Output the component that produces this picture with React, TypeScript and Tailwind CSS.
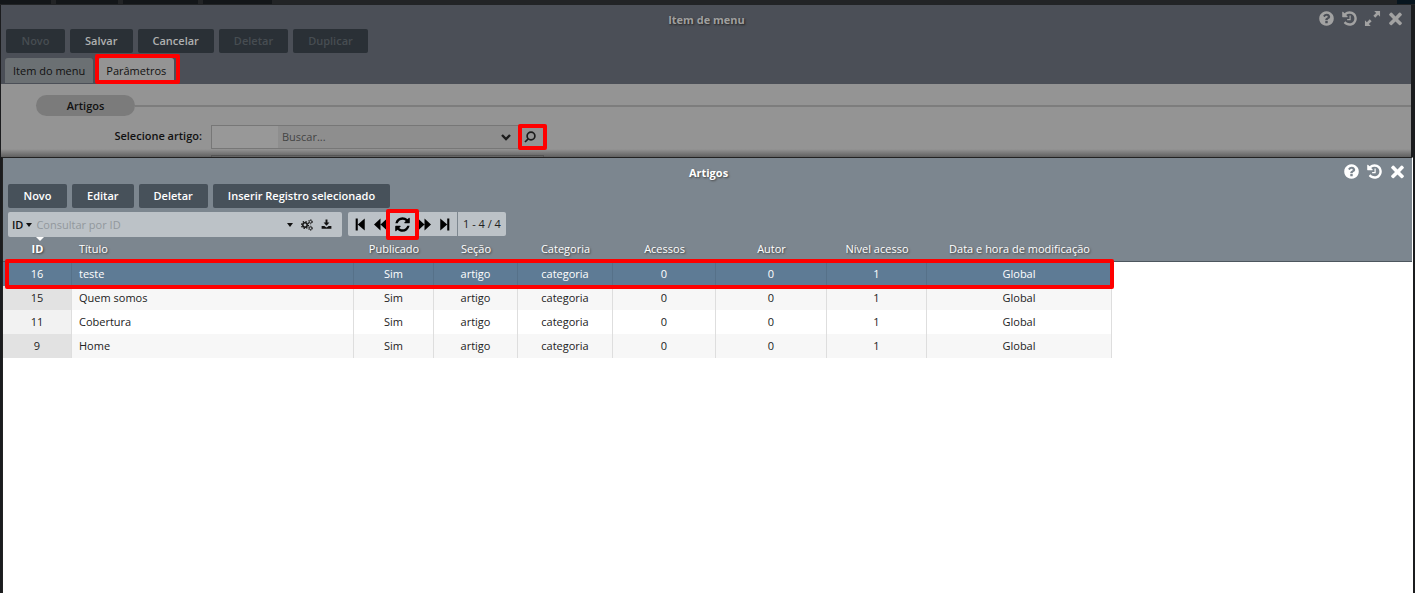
import React from "react";

const ICONS = {
  help: "M1024 1376v-192q0-14-9-23t-23-9h-192q-14 0-23 9t-9 23v192q0 14 9 23t23 9h192q14 0 23-9t9-23zm256-672q0-88-55.5-163t-138.5-116-170-41q-243 0-371 213-15 24 8 42l132 100q7 6 19 6 16 0 25-12 53-68 86-92 34-24 86-24 48 0 85.5 26t37.5 59q0 38-20 61t-68 45q-63 28-115.5 86.5t-52.5 125.5v36q0 14 9 23t23 9h192q14 0 23-9t9-23q0-19 21.5-49.5t54.5-49.5q32-18 49-28.5t46-35 44.5-48 28-60.5 12.5-81zm384 192q0 209-103 385.5t-279.5 279.5-385.5 103-385.5-103-279.5-279.5-103-385.5 103-385.5 279.5-279.5 385.5-103 385.5 103 279.5 279.5 103 385.5z",
  history:
    "M1664 896q0 156-61 298t-164 245-245 164-298 61q-172 0-327-72.5t-264-204.5q-7-10-6.5-22.5t8.5-20.5l137-138q10-9 25-9 16 2 23 12 73 95 179 147t225 52q104 0 198.5-40.5t163.5-109.5 109.5-163.5 40.5-198.5-40.5-198.5-109.5-163.5-163.5-109.5-198.5-40.5q-98 0-188 35.5t-160 101.5l137 138q31 30 14 69-17 40-59 40h-448q-26 0-45-19t-19-45v-448q0-42 40-59 39-17 69 14l130 129q107-101 244.5-156.5t284.5-55.5q156 0 298 61t245 164 164 245 61 298zm-640-288v448q0 14-9 23t-23 9h-320q-14 0-23-9t-9-23v-64q0-14 9-23t23-9h224v-352q0-14 9-23t23-9h64q14 0 23 9t9 23z",
  close:
    "M1570 1392q0 44-30 74l-120 120q-30 30-74 30t-74-30l-376-376-376 376q-30 30-74 30t-74-30l-120-120q-30-30-30-74t30-74l376-376-376-376q-30-30-30-74t30-74l120-120q30-30 74-30t74 30l376 376 376-376q30-30 74-30t74 30l120 120q30 30 30 74t-30 74l-376 376 376 376q30 30 30 74z",
  expand:
    "M1080 100h612v612l-205-205-300 300-202-202 300-300zM712 1692h-612v-612l205 205 300-300 202 202-300 300z",
  refresh:
    "M1639 1056q0 5-1 7-64 268-268 434.5t-478 166.5q-146 0-282.5-55t-243.5-157l-129 129q-19 19-45 19t-45-19-19-45v-448q0-26 19-45t45-19h448q26 0 45 19t19 45-19 45l-137 137q71 66 161 102t187 36q134 0 250-65t186-179q11-17 53-117 8-23 30-23h192q13 0 22.5 9.5t9.5 22.5zm25-800v448q0 26-19 45t-45 19h-448q-26 0-45-19t-19-45 19-45l138-138q-148-137-349-137-134 0-250 65t-186 179q-11 17-53 117-8 23-30 23h-199q-13 0-22.5-9.5t-9.5-22.5v-7q65-268 270-434.5t480-166.5q146 0 284 55.5t245 156.5l130-129q19-19 45-19t45 19 19 45z",
  download:
    "M740 100h312v480h320l-476 500-476-500h320zM100 1150h440l356 220 356-220h440v450h-1592z",
  first: "M230 60h290v1672h-290zM520 896l960-836v1672z",
  prev: "M0 896l896-836v1672zM896 896l896-836v1672z",
  next: "M0 60l896 836-896 836zM896 60l896 836-896 836z",
  last: "M312 60l960 836-960 836zM1272 60h290v1672h-290z",
};

type IconName = keyof typeof ICONS;

const Icon = ({ name, className }: { name: IconName; className: string }) => (
  <svg viewBox="0 0 1792 1792" fill="currentColor" className={className}>
    <path d={ICONS[name]} />
  </svg>
);

const Caret = () => (
  <svg viewBox="0 0 6 4" className="h-1 w-1.5" fill="currentColor">
    <path d="M0 0h6L3 4z" />
  </svg>
);

const Cogs = () => (
  <svg
    viewBox="0 0 24 24"
    className="h-3 w-3"
    fill="none"
    stroke="currentColor"
  >
    <circle cx="8" cy="12" r="4.4" strokeWidth="3" />
    <circle cx="8" cy="12" r="7" strokeWidth="2.4" strokeDasharray="2.75 2.75" />
    <circle cx="19" cy="5.5" r="2.6" strokeWidth="1.8" />
    <circle cx="19" cy="5.5" r="4.2" strokeWidth="1.6" strokeDasharray="2.2 2.2" />
    <circle cx="19" cy="18.5" r="2.6" strokeWidth="1.8" />
    <circle cx="19" cy="18.5" r="4.2" strokeWidth="1.6" strokeDasharray="2.2 2.2" />
  </svg>
);

const Mark = ({ className }: { className: string }) => (
  <span
    className={`pointer-events-none absolute z-10 rounded-[2px] border-4 border-[#fe0000] ${className}`}
  />
);

const IconButton = ({ name, label }: { name: IconName; label: string }) => (
  <button aria-label={label}>
    <Icon name={name} className="h-[17px] w-[17px]" />
  </button>
);

const columns = [
  { title: "ID", width: "w-[69px]" },
  { title: "Título", width: "w-[282px]" },
  { title: "Publicado", width: "w-[80px]" },
  { title: "Seção", width: "w-[84px]" },
  { title: "Categoria", width: "w-[95px]" },
  { title: "Acessos", width: "w-[103px]" },
  { title: "Autor", width: "w-[111px]" },
  { title: "Nível acesso", width: "w-[100px]" },
  { title: "Data e hora de modificação", width: "w-[185px]" },
];

const rows = [
  ["16", "teste", "Sim", "artigo", "categoria", "0", "0", "1", "Global"],
  ["15", "Quem somos", "Sim", "artigo", "categoria", "0", "0", "1", "Global"],
  ["11", "Cobertura", "Sim", "artigo", "categoria", "0", "0", "1", "Global"],
  ["9", "Home", "Sim", "artigo", "categoria", "0", "0", "1", "Global"],
];

const backButtons = [
  { label: "Novo", disabled: true },
  { label: "Salvar", disabled: false },
  { label: "Cancelar", disabled: false },
  { label: "Deletar", disabled: true },
  { label: "Duplicar", disabled: true },
];

const MenuItemWindow = () => (
  <section className="mr-1 ml-px bg-[#949494]">
    <header className="bg-[#4b4f57] px-1">
      <div className="flex h-6 pt-[5px]">
        <div className="flex-1 pl-1" />
        <h1 className="pt-0.5 font-bold text-[#a0a0a0] [text-shadow:1px_1px_2px_#222]">
          Item de menu
        </h1>
        <div className="flex flex-1 items-start justify-end gap-1.5 pr-[3px] text-[#a2a2a2]">
          <IconButton name="help" label="Ajuda" />
          <IconButton name="history" label="Histórico" />
          <IconButton name="expand" label="Expandir" />
          <IconButton name="close" label="Fechar" />
        </div>
      </div>
      <div className="flex gap-[5px] px-px">
        {backButtons.map((b) => (
          <button
            key={b.label}
            disabled={b.disabled}
            className="h-6 min-w-[59px] rounded-[2px] bg-[#2a3036] px-[15px] font-semibold text-[#b0b0b0] disabled:text-[#474d52]"
          >
            {b.label}
          </button>
        ))}
      </div>
      <nav className="mt-[5px] flex gap-[5px]">
        <button className="h-[25px] rounded-t-[3px] bg-[#6b7073] px-2 text-[#111]">
          Item do menu
        </button>
        <div className="relative">
          <button className="h-[25px] rounded-t-[3px] bg-[#949494] px-2 text-[#111]">
            Parâmetros
          </button>
          <Mark className="-top-1 -right-1.5 -bottom-px -left-[3px]" />
        </div>
      </nav>
      <div className="h-px" />
    </header>

    <div className="flex items-center pt-[11px] pl-[35px]">
      <h2 className="flex h-[21px] w-[99px] items-center justify-center rounded-full bg-[#7b7b7b] font-semibold text-[#111]">
        Artigos
      </h2>
      <div className="h-0.5 flex-1 bg-[#7d7d7d]" />
    </div>
    <div className="mt-[9px] flex items-start">
      <label
        htmlFor="artigo"
        className="w-[201px] pt-[3px] text-right font-semibold text-[#111]"
      >
        Selecione artigo:
      </label>
      <div className="ml-[9px] flex h-6 w-[334px] border border-[#777]">
        <input
          aria-label="Código do artigo"
          className="w-[66px] bg-[#989898]"
        />
        <input
          id="artigo"
          placeholder="Buscar..."
          className="min-w-0 flex-1 bg-[#8e8e8e] px-1 placeholder:text-[#444]"
        />
        <button aria-label="Abrir lista" className="w-[25px] bg-[#8e8e8e] pl-2">
          <svg
            viewBox="0 0 10 7"
            className="h-[7px] w-2.5"
            fill="none"
            stroke="#1c1c1c"
            strokeWidth="2.4"
          >
            <path d="M1 1l4 4 4-4" />
          </svg>
        </button>
        <div className="relative flex w-[26px] border-l border-[#777]">
          <button aria-label="Pesquisar" className="pl-[5px]">
            <svg
              viewBox="0 0 12 12"
              className="h-3 w-3"
              fill="none"
              stroke="#1c1c1c"
              strokeWidth="1.7"
            >
              <circle cx="7" cy="5" r="3.9" />
              <path d="M4.2 7.8L1 11" />
            </svg>
          </button>
          <Mark className="-inset-y-[2px] -right-[3px] -left-px" />
        </div>
      </div>
    </div>
    <div className="flex h-2 items-end bg-linear-to-b from-[#949494] to-[#606060] pl-[210px]">
      <div className="h-0.5 w-[333px] border border-b-0 border-[#555]" />
    </div>
  </section>
);

const SearchBar = () => (
  <div className="mt-1 flex gap-1.5 px-[5px]">
    <div className="flex h-[25px] w-[334px] items-center rounded-[2px] bg-[#bcc2c7] px-1 text-[#111]">
      <button className="flex items-center gap-[3px] font-semibold">
        ID <Caret />
      </button>
      <input
        aria-label="Consultar por ID"
        placeholder="Consultar por ID"
        className="ml-1 min-w-0 flex-1 placeholder:text-[#92989d]"
      />
      <div className="flex items-center gap-2 pr-1.5">
        <button aria-label="Opções">
          <Caret />
        </button>
        <button aria-label="Configurar">
          <Cogs />
        </button>
        <button aria-label="Exportar">
          <Icon name="download" className="h-[11px] w-[11px]" />
        </button>
      </div>
    </div>
    <div className="flex h-6 items-center rounded-[2px] bg-[#bcc2c7] text-black">
      <div className="flex items-center gap-[7px] px-1.5">
        <button aria-label="Primeiro">
          <Icon name="first" className="h-[13px] w-[13px]" />
        </button>
        <button aria-label="Anterior">
          <Icon name="prev" className="h-[13px] w-[13px]" />
        </button>
        <div className="relative">
          <button aria-label="Atualizar" className="block">
            <Icon name="refresh" className="h-[17px] w-[17px]" />
          </button>
          <Mark className="-inset-x-2 -inset-y-[7px]" />
        </div>
        <button aria-label="Próximo">
          <Icon name="next" className="h-[13px] w-[13px]" />
        </button>
        <button aria-label="Último">
          <Icon name="last" className="h-[13px] w-[13px]" />
        </button>
      </div>
      <span className="flex h-full items-center border-l border-[#7d878f] px-[5px] text-[#222]">
        1 - 4 / 4
      </span>
    </div>
  </div>
);

const ArticlesWindow = () => (
  <section className="mr-0.5 ml-0.5 flex-1 border-x border-t border-[#222] border-r-transparent bg-white">
    <header className="bg-[#7c868f]">
      <div className="flex h-[26px] pt-[5px]">
        <div className="flex-1 pl-2" />
        <h2 className="pt-0.5 font-bold text-white [text-shadow:1px_1px_2px_#444]">
          Artigos
        </h2>
        <div className="flex flex-1 items-start justify-end gap-1.5 pr-1.5 text-white">
          <IconButton name="help" label="Ajuda" />
          <IconButton name="history" label="Histórico" />
          <IconButton name="close" label="Fechar" />
        </div>
      </div>
      <div className="flex gap-[5px] px-[5px]">
        {["Novo", "Editar", "Deletar", "Inserir Registro selecionado"].map(
          (label) => (
            <button
              key={label}
              className="h-6 min-w-[59px] rounded-[2px] bg-[#47515a] px-[15px] font-semibold text-white"
            >
              {label}
            </button>
          )
        )}
      </div>
      <SearchBar />
    </header>

    <div>
      <div className="h-[25px] border-b border-[#4d565e] bg-[#7c868f]" />
      <div className="relative -mt-[25px] w-[1109px]">
        <table className="w-full table-fixed border-separate border-spacing-0 text-center">
          <thead>
            <tr className="h-[25px] text-white [text-shadow:1px_1px_2px_#444]">
              {columns.map((col, i) => (
                <th
                  key={col.title}
                  className={`relative p-0 pb-0.5 ${col.width} ${
                    i === 1 ? "pl-[7px] text-left" : ""
                  } ${i === 0 ? "font-bold" : "font-medium"}`}
                >
                  {i === 0 && (
                    <svg
                      viewBox="0 0 8 4"
                      className="absolute top-0 left-[33px] h-1 w-2"
                      fill="white"
                    >
                      <path d="M0 0h8L4 4z" />
                    </svg>
                  )}
                  {col.title}
                </th>
              ))}
            </tr>
          </thead>
          <tbody>
            {rows.map((row, r) => (
              <tr
                key={row[0]}
                className={`h-6 ${
                  r === 0
                    ? "bg-[#5e7b95] font-medium text-white"
                    : "text-[#222] odd:bg-white even:bg-[#f7f7f7]"
                }`}
              >
                {row.map((cell, i) => (
                  <td
                    key={i}
                    className={`border-r p-0 ${
                      r === 0 ? "border-[#567189]" : "border-[#dedede]"
                    } ${i === 1 ? "pl-[7px] text-left" : ""} ${
                      i === 0 && r > 0
                        ? r % 2
                          ? "bg-[#e2e2e2]"
                          : "bg-[#f2f2f2]"
                        : ""
                    }`}
                  >
                    {cell}
                  </td>
                ))}
              </tr>
            ))}
          </tbody>
        </table>
        <Mark className="top-[22px] -right-0.5 left-0.5 h-[30px]" />
      </div>
    </div>
  </section>
);

const App = () => {
  return (
    <div className="flex min-h-screen flex-col bg-[#1b1c1e] font-['Open_Sans','Noto_Sans',sans-serif] text-[11px] leading-4">
      <div className="flex h-[5px] gap-[5px] bg-[#222426] pb-px">
        <div className="w-[51px] bg-[#131619]" />
        <div className="w-[62px] bg-[#131619]" />
        <div className="w-[75px] bg-[#131619]" />
        <div className="w-[69px] bg-[#131619]" />
        <div className="flex-1" />
        <div className="w-[18px] bg-[#07151f]" />
      </div>
      <MenuItemWindow />
      <ArticlesWindow />
    </div>
  );
};

export default App;
